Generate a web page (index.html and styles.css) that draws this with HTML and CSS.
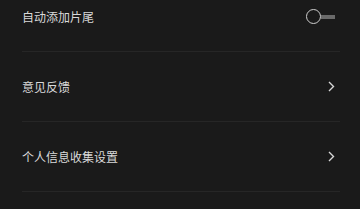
FILE: index.html
```html
<!DOCTYPE html>
<html>
<head>
    <meta charset="utf-8">
    <link rel="stylesheet" href="styles.css">
</head>
<body>
    <div class="settings-list">
        <div class="setting-row">
            <span class="setting-label">自动添加片尾</span>
            <span class="switch">
                <span class="switch-knob"></span>
                <span class="switch-track"></span>
            </span>
        </div>
        <div class="setting-row">
            <span class="setting-label">意见反馈</span>
            <svg class="chevron" width="7" height="11" viewBox="0 0 7 11">
                <path d="M1 1 L5.5 5.5 L1 10" fill="none" stroke="#d6d6d6" stroke-width="1.4"/>
            </svg>
        </div>
        <div class="setting-row">
            <span class="setting-label">个人信息收集设置</span>
            <svg class="chevron" width="7" height="11" viewBox="0 0 7 11">
                <path d="M1 1 L5.5 5.5 L1 10" fill="none" stroke="#d6d6d6" stroke-width="1.4"/>
            </svg>
        </div>
    </div>
</body>
</html>
```

FILE: styles.css
```css
body {
    margin: 0;
    background: #1a1a1a;
    overflow: hidden;
    font-family: "Noto Sans CJK SC", "Noto Sans", sans-serif;
}

.settings-list {
    margin-top: -18px;
    padding: 0 20px 0 22px;
}

.setting-row {
    height: 69px;
    display: flex;
    align-items: center;
    justify-content: space-between;
    border-bottom: 1px solid #262626;
}

.setting-label {
    font-size: 12px;
    color: #d9d9d9;
}

.switch {
    display: flex;
    align-items: center;
    margin-right: 5px;
}

.switch-knob {
    width: 13px;
    height: 13px;
    border: 1.6px solid #cfcfcf;
    border-radius: 50%;
}

.switch-track {
    width: 14px;
    height: 4px;
    background: #6a6a6a;
}

.chevron {
    margin-right: 5px;
}
```
